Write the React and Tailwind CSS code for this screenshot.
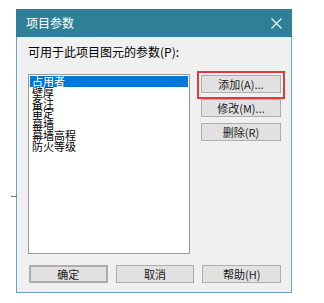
const items = ['占用者', '壁厚', '备注', '审定', '幕墙', '幕墙高程', '防火等级'];

const Btn = ({ children, className = '' }) => (
  <button
    type="button"
    className={`w-[80px] h-[18px] bg-[#e1e1e1] border border-[#adadad] text-[11px] leading-none text-[#1a1a1a] flex items-center justify-center ${className}`}
  >
    {children}
  </button>
);

export default function App() {
  return (
    <div
      className="w-[324px] h-[303px] bg-white relative pt-[9px] pl-[16px]"
      style={{ fontFamily: '"Noto Sans CJK SC", "Noto Sans", sans-serif' }}
    >
      {/* stray mark from the page behind */}
      <div className="absolute left-[11px] top-[196px] w-[6px] h-[1px] bg-[#707070]" />

      <div className="w-[276px] h-[284px] border border-[#6aa6bb] border-t-0 bg-[#f0f0f0] flex flex-col">
        {/* title bar */}
        <div className="h-[28px] bg-[#2f7f99] flex items-center justify-between pl-[10px] pr-[9px] -mx-[1px]">
          <span className="text-white text-[12px] leading-none">项目参数</span>
          <svg width="11" height="11" viewBox="0 0 11 11" className="mr-[1px]">
            <path d="M0.5 0.5 L10.5 10.5 M10.5 0.5 L0.5 10.5" stroke="#ffffff" strokeWidth="1.1" />
          </svg>
        </div>

        {/* body */}
        <div className="flex-1 flex flex-col pl-[11px] pr-[10px] pb-[9px]">
          <div className="mt-[8px] text-[12px] leading-[14px] text-black">可用于此项目图元的参数(P):</div>

          <div className="mt-[15px] flex">
            <div className="w-[162px] h-[180px] bg-white border border-[#9a9a9a] p-[1px]">
              {items.map((it, i) => (
                <div
                  key={it}
                  className={`h-[10.8px] pl-[2px] text-[11px] leading-[10.8px] whitespace-nowrap ${
                    i === 0 ? 'bg-[#0078d7] text-white' : 'text-black'
                  }`}
                >
                  {it}
                </div>
              ))}
            </div>

            <div className="ml-[11px] mt-[1px] flex flex-col gap-[6px]">
              <div className="relative">
                <Btn>添加(A)...</Btn>
                <div className="absolute -left-[4px] -right-[4px] -top-[4px] -bottom-[6px] border-2 border-[#e0393e]" />
              </div>
              <Btn>修改(M)...</Btn>
              <Btn>删除(R)</Btn>
            </div>
          </div>

          <div className="mt-auto flex gap-[8px] pl-[1px]">
            <Btn className="w-[78px] border-2 border-[#0078d7]">确定</Btn>
            <Btn className="w-[79px]">取消</Btn>
            <Btn className="w-[79px]">帮助(H)</Btn>
          </div>
        </div>
      </div>
    </div>
  );
}
